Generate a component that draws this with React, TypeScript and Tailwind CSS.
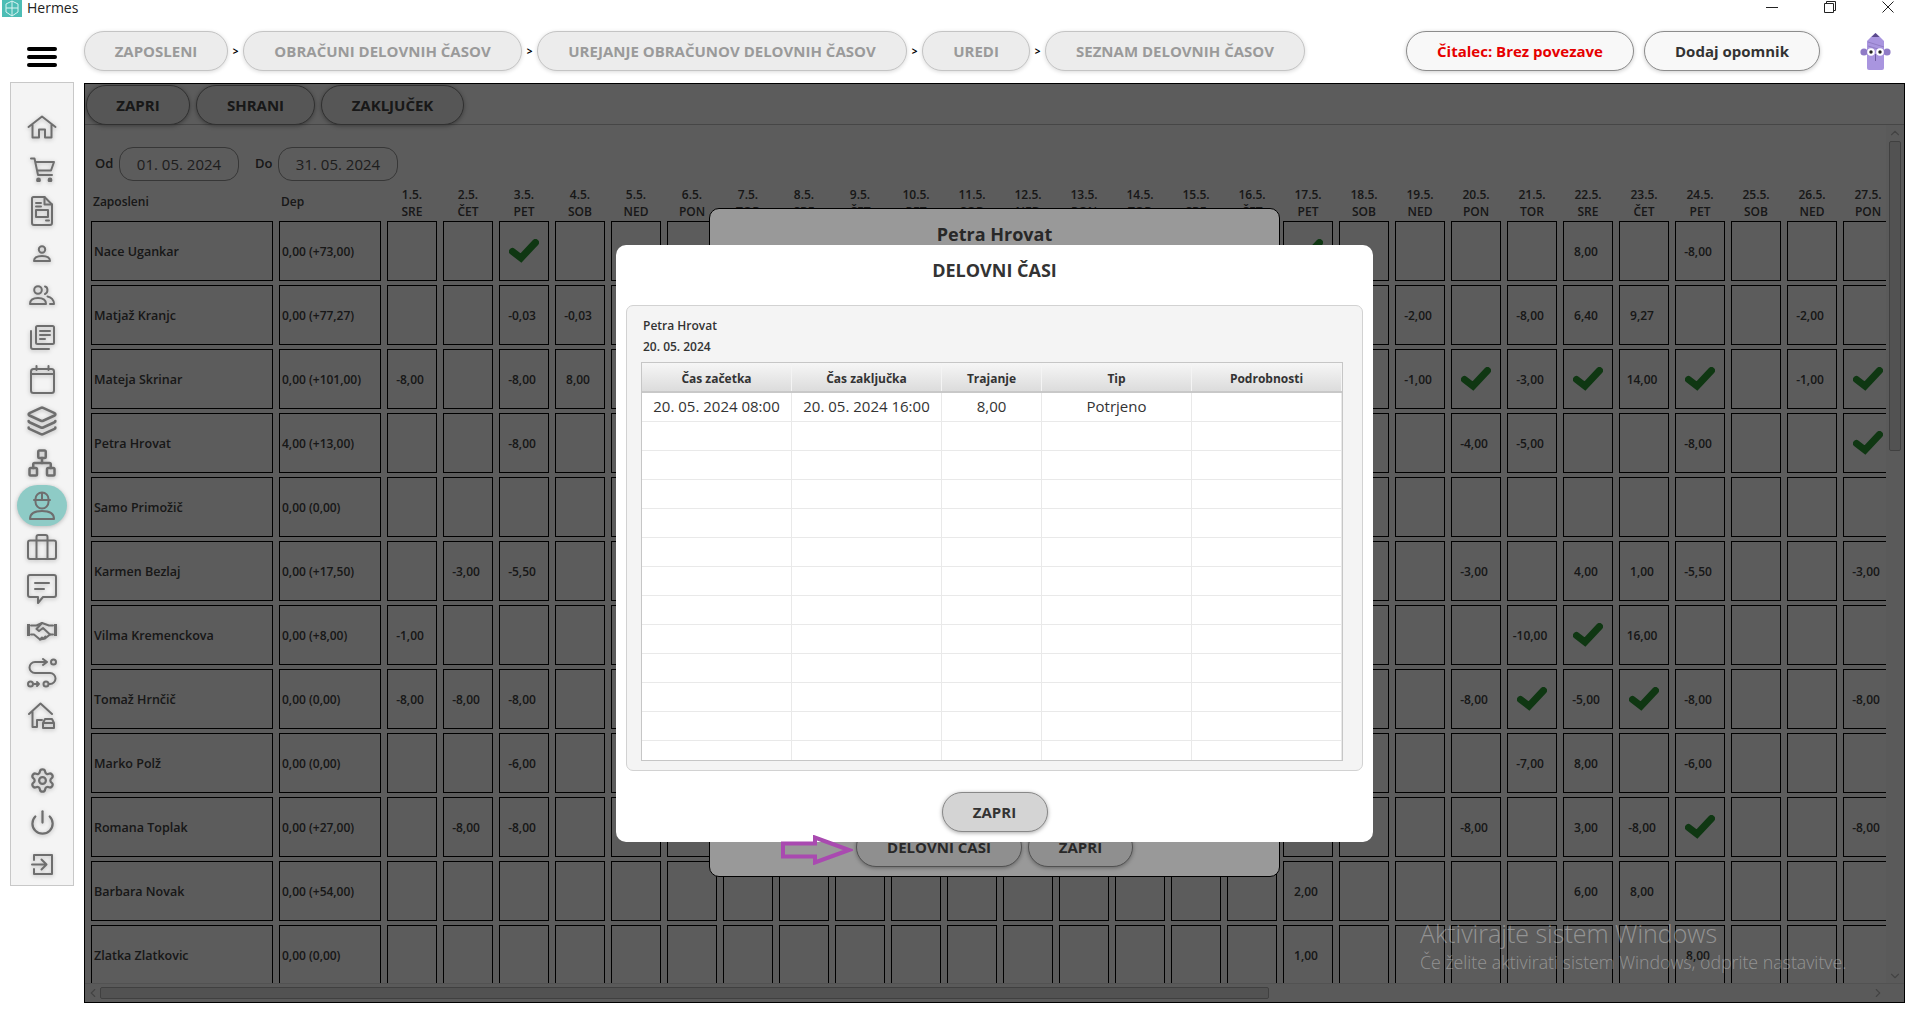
import { ChevronDown, ChevronLeft, ChevronRight, ChevronUp, Layers, Network, Power, Settings } from "lucide-react";
import type { ReactNode } from "react";

const WEEK = ["SRE", "ČET", "PET", "SOB", "NED", "PON", "TOR"];
const DAYS = Array.from({ length: 27 }, (_, i) => ({ day: i + 1, name: WEEK[i % 7] }));

const ROWS: { name: string; dep: string; cells: Record<number, string> }[] = [
  { name: "Nace Ugankar", dep: "0,00 (+73,00)", cells: { 3: "v", 17: "v", 22: "8,00", 24: "-8,00" } },
  { name: "Matjaž Kranjc", dep: "0,00 (+77,27)", cells: { 3: "-0,03", 4: "-0,03", 19: "-2,00", 21: "-8,00", 22: "6,40", 23: "9,27", 26: "-2,00" } },
  { name: "Mateja Skrinar", dep: "0,00 (+101,00)", cells: { 1: "-8,00", 3: "-8,00", 4: "8,00", 19: "-1,00", 20: "v", 21: "-3,00", 22: "v", 23: "14,00", 24: "v", 26: "-1,00", 27: "v" } },
  { name: "Petra Hrovat", dep: "4,00 (+13,00)", cells: { 3: "-8,00", 20: "-4,00", 21: "-5,00", 24: "-8,00", 27: "v" } },
  { name: "Samo Primožič", dep: "0,00 (0,00)", cells: {} },
  { name: "Karmen Bezlaj", dep: "0,00 (+17,50)", cells: { 2: "-3,00", 3: "-5,50", 20: "-3,00", 22: "4,00", 23: "1,00", 24: "-5,50", 27: "-3,00" } },
  { name: "Vilma Kremenckova", dep: "0,00 (+8,00)", cells: { 1: "-1,00", 21: "-10,00", 22: "v", 23: "16,00" } },
  { name: "Tomaž Hrnčič", dep: "0,00 (0,00)", cells: { 1: "-8,00", 2: "-8,00", 3: "-8,00", 20: "-8,00", 21: "v", 22: "-5,00", 23: "v", 24: "-8,00", 27: "-8,00" } },
  { name: "Marko Polž", dep: "0,00 (0,00)", cells: { 3: "-6,00", 21: "-7,00", 22: "8,00", 24: "-6,00" } },
  { name: "Romana Toplak", dep: "0,00 (+27,00)", cells: { 2: "-8,00", 3: "-8,00", 20: "-8,00", 22: "3,00", 23: "-8,00", 24: "v", 27: "-8,00" } },
  { name: "Barbara Novak", dep: "0,00 (+54,00)", cells: { 17: "2,00", 22: "6,00", 23: "8,00" } },
  { name: "Zlatka Zlatkovic", dep: "0,00 (0,00)", cells: { 17: "1,00", 24: "8,00" } },
];

const CRUMBS = [
  { label: "ZAPOSLENI", width: "w-[144px]" },
  { label: "OBRAČUNI DELOVNIH ČASOV", width: "w-[279px]" },
  { label: "UREJANJE OBRAČUNOV DELOVNIH ČASOV", width: "w-[370px]" },
  { label: "UREDI", width: "w-[108px]" },
  { label: "SEZNAM DELOVNIH ČASOV", width: "w-[260px]" },
];

const COLUMNS = [
  { label: "Čas začetka", width: "w-[150px]" },
  { label: "Čas zaključka", width: "w-[150px]" },
  { label: "Trajanje", width: "w-[100px]" },
  { label: "Tip", width: "w-[150px]" },
  { label: "Podrobnosti", width: "flex-1" },
];

const ENTRY = ["20. 05. 2024 08:00", "20. 05. 2024 16:00", "8,00", "Potrjeno", ""];

function Check() {
  return (
    <svg width="30" height="24" viewBox="0 0 30 24" fill="none">
      <path d="M3.5 12.5 12 19 26.5 3.5" stroke="#2a9a35" strokeWidth="7" strokeLinecap="round" />
    </svg>
  );
}

function Svg({ w, h, box, children }: { w: number; h: number; box: string; children: ReactNode }) {
  return (
    <svg width={w} height={h} viewBox={box} fill="none" stroke="currentColor" strokeWidth="2" strokeLinecap="round" strokeLinejoin="round">
      {children}
    </svg>
  );
}

const ICONS: ReactNode[] = [
  <Svg w={30} h={24} box="0 0 30 24" key="home">
    <path d="M1.5 12 15 1.5 28.5 12M5.5 9.5V22.5H12V14.5H18V22.5H24.5V9.5" />
  </Svg>,
  <Svg w={25} h={25} box="0 0 25 25" key="cart">
    <path d="M1 1.5h3.5L8 18h14M5.5 5H24l-3 8.5H7.5" />
    <circle cx="8.5" cy="23" r="1.4" fill="currentColor" />
    <circle cx="20" cy="23" r="1.4" fill="currentColor" />
  </Svg>,
  <Svg w={22} h={30} box="0 0 22 30" key="doc">
    <path d="M2.5 1h11L21 8.5V27a2 2 0 0 1-2 2H3a2 2 0 0 1-2-2V2.500A1.500 1.500 0 0 1 2.500 1Z" />
    <path d="M13.500 1v7.500H21M5 7h5M5 10.500h5M15 24.500h3" />
    <rect x="5" y="14" width="12" height="7" />
  </Svg>,
  <Svg w={18} h={17} box="0 0 18 17" key="user">
    <circle cx="9" cy="4.500" r="3.200" />
    <path d="M1 16c0-3.500 3.500-5 8-5s8 1.500 8 5Z" />
  </Svg>,
  <Svg w={26} h={20} box="0 0 26 20" key="users">
    <circle cx="9" cy="5" r="3.800" />
    <path d="M1 19c0-4 3.500-6 8-6s8 2 8 6ZM16 1.500c3 .5 3.500 6 0 7.500M18.500 11.500c3.500.5 6.500 3.500 6.500 7.500h-4" />
  </Svg>,
  <Svg w={25} h={25} box="0 0 25 25" key="news">
    <rect x="6" y="1" width="18" height="18" rx="1.500" />
    <path d="M10 6h10M10 10h10M10 14h5M1 6v16a2 2 0 0 0 2 2h16" />
  </Svg>,
  <Svg w={25} h={29} box="0 0 25 29" key="calendar">
    <rect x="1" y="4" width="23" height="24" rx="2.500" />
    <path d="M1 9h23M6.500 1v4M18.500 1v4" />
  </Svg>,
  <Layers size={32} key="layers" />,
  <Network size={30} key="network" />,
  <Svg w={26} h={30} box="0 0 26 30" key="worker">
    <path d="M6.500 9a6.500 6.500 0 0 1 13 0v3a6.500 6.500 0 0 1-13 0ZM5 10h16M13 2.500V10" />
    <path d="M1 29c0-6 5-8 12-8s12 2 12 8Z" />
  </Svg>,
  <Svg w={30} h={26} box="0 0 30 26" key="case">
    <rect x="1" y="6.500" width="28" height="18.500" rx="2" />
    <path d="M9.500 25V3a2 2 0 0 1 2-2h7a2 2 0 0 1 2 2v22" />
  </Svg>,
  <Svg w={30} h={30} box="0 0 30 30" key="message">
    <path d="M3 1h24a2 2 0 0 1 2 2v18a2 2 0 0 1-2 2H16l-5 6v-6H3a2 2 0 0 1-2-2V3a2 2 0 0 1 2-2Z" />
    <path d="M8 9h14M8 15h9" />
  </Svg>,
  <Svg w={30} h={20} box="0 0 30 20" key="hands">
    <path d="M1.500 3v12M28.500 3v12" strokeWidth="3" strokeLinecap="butt" />
    <path d="M4 4.500h5.500L15 2l7 2.500h4M4 13.500h3l6 5 5-1 5-4h3" />
    <path d="M15 2 9.500 8l2.500 2 4-3 7 6.500M13 18.500l2-2M16.500 17.500l2-2" />
  </Svg>,
  <Svg w={30} h={30} box="0 0 30 30" key="route">
    <path d="M19 4H8a5.500 5.500 0 0 0 0 11h15a5.500 5.500 0 0 1 0 11h-1" />
    <path d="m16 1 4 3-4 3" />
    <circle cx="26.500" cy="4" r="2.500" />
    <circle cx="3.500" cy="26" r="2.500" />
    <circle cx="19" cy="26" r="2.500" />
    <path d="M7 26h5m-2-2 2 2-2 2" />
  </Svg>,
  <Svg w={29} h={27} box="0 0 29 27" key="garage">
    <path d="M1 12 12.500 1.500 24 12M4.500 9.500V25H9v-7h5" />
    <path d="M15 26v-5l2-4h7l2 4v5ZM15 21h11" />
  </Svg>,
  <Settings size={27} key="settings" />,
  <Power size={27} key="power" />,
  <Svg w={23} h={23} box="0 0 23 23" key="login">
    <path d="M3 7V2h18v19H3v-5M1 11.500h14M10.500 6.500l5 5-5 5" />
  </Svg>,
];

function Sidebar() {
  return (
    <div className="ml-[10px] flex h-[804px] w-[64px] flex-col items-center border border-[#c8c8c8] bg-[#f4f4f4] pt-[23px] text-[#6e6e6e]">
      {ICONS.map((icon, i) => (
        <div
          key={i}
          className={`flex h-[42px] w-full shrink-0 items-center justify-center drop-shadow-[0_1px_2px_rgba(0,0,0,0.25)] ${i === 15 ? "mt-[23px]" : ""}`}
        >
          {i === 9 ? (
            <div className="flex h-[41px] w-[50px] items-center justify-center rounded-full bg-[#8ecbc6]">{icon}</div>
          ) : (
            icon
          )}
        </div>
      ))}
    </div>
  );
}

function Header() {
  return (
    <div className="flex h-[65px] shrink-0 items-start pt-[14px] pr-[29px]">
      <div className="flex w-[84px] flex-col gap-[4px] pt-[16px] pl-[27px]">
        <span className="h-[4px] w-[30px] rounded-full bg-black" />
        <span className="h-[4px] w-[30px] rounded-full bg-black" />
        <span className="h-[4px] w-[30px] rounded-full bg-black" />
      </div>
      {CRUMBS.map((crumb, i) => (
        <div key={crumb.label} className="flex items-center">
          {i > 0 && <span className="w-[15px] text-center text-[10px] font-bold text-black">&gt;</span>}
          <div
            className={`flex h-[40px] items-center justify-center rounded-[20px] border border-[#c4c4c4] bg-[#ececec] text-[15px] font-bold text-[#9a9a9a] shadow-[0_1px_4px_rgba(0,0,0,0.15)] ${crumb.width}`}
          >
            {crumb.label}
          </div>
        </div>
      ))}
      <div className="ml-auto flex h-[40px] w-[228px] items-center justify-center rounded-[20px] border border-[#8c8c8c] bg-[#f8f8f8] text-[15px] font-bold text-[#e60000] shadow-[0_1px_4px_rgba(0,0,0,0.2)]">
        Čitalec: Brez povezave
      </div>
      <div className="ml-[10px] flex h-[40px] w-[176px] items-center justify-center rounded-[20px] border border-[#8c8c8c] bg-[#f8f8f8] text-[15px] font-bold text-[#333] shadow-[0_1px_4px_rgba(0,0,0,0.2)]">
        Dodaj opomnik
      </div>
      <svg className="mt-[2px] ml-[40px]" width="31" height="37" viewBox="0 0 31 37">
        <circle cx="4" cy="19" r="3.600" fill="#8f7bc6" />
        <circle cx="27" cy="19" r="3.600" fill="#8f7bc6" />
        <path d="M15.500 0 20 4l4 4v27a2 2 0 0 1-2 2H9a2 2 0 0 1-2-2V8l4-4Z" fill="#a995df" />
        <path d="M11.500 4h8L15.500 0Z" fill="#5b4a8c" />
        <path d="M8 9l16 5M8 13l10 3" stroke="#8a76bd" strokeWidth="0.800" />
        <circle cx="11" cy="19" r="3.800" fill="#fff" />
        <circle cx="20" cy="19" r="3.800" fill="#fff" />
        <circle cx="11" cy="19" r="1.700" fill="#222" />
        <circle cx="20" cy="19" r="1.700" fill="#222" />
        <path d="M15.500 21v7" stroke="#6d5b9e" strokeWidth="1" />
      </svg>
    </div>
  );
}

function TitleBar() {
  return (
    <div className="flex h-[17px] shrink-0 items-start text-[14px] leading-[15px] text-[#222]">
      <svg className="ml-[2px]" width="20" height="17" viewBox="0 0 20 17" fill="none">
        <rect width="20" height="17" fill="#4dbdb5" />
        <path d="M10 1 16 4v8l-6 4-6-4V4ZM10 1v15M4 8h12" stroke="#d9f3f1" strokeWidth="1" />
      </svg>
      <span className="ml-[5px]">Hermes</span>
      <div className="mt-[1px] ml-auto flex items-center gap-[46px] pr-[26px]">
        <span className="h-px w-[12px] bg-[#222]" />
        <svg width="12" height="12" viewBox="0 0 12 12" fill="none" stroke="#222">
          <path d="M.5 2.500h9v9h-9ZM2.500 2.500V.5h9v9h-2" />
        </svg>
        <svg width="12" height="12" viewBox="0 0 12 12" fill="none" stroke="#222">
          <path d="M.5.5l11 11M11.500.5l-11 11" />
        </svg>
      </div>
    </div>
  );
}

function Pill({ children, className }: { children: ReactNode; className: string }) {
  return (
    <div
      className={`flex h-[40px] items-center justify-center rounded-[20px] border border-[#888] bg-[#eeeeee] text-[15px] font-bold text-[#444] shadow-[0_1px_4px_rgba(0,0,0,0.35)] ${className}`}
    >
      {children}
    </div>
  );
}

function DateField({ label, value, labelWidth }: { label: string; value: string; labelWidth: string }) {
  return (
    <>
      <span className={`text-[13px] font-semibold text-[#444] ${labelWidth}`}>{label}</span>
      <div className="flex h-[34px] w-[120px] items-center justify-center rounded-[14px] border border-[#999] text-[15px] text-[#555]">
        {value}
      </div>
    </>
  );
}

function Grid() {
  return (
    <div className="flex-1 overflow-hidden pl-[6px] text-[12px] font-semibold text-[#444]">
      <div className="mt-[4px] flex h-[36px] items-center">
        <span className="mb-[3px] w-[188px] shrink-0 pl-[2px]">Zaposleni</span>
        <span className="mb-[3px] w-[108px] shrink-0 pl-[2px]">Dep</span>
        {DAYS.map((d) => (
          <div key={d.day} className="mr-[6px] w-[50px] shrink-0 text-center leading-[17px]">
            <div>{d.day}.5.</div>
            <div>{d.name}</div>
          </div>
        ))}
      </div>
      <div className="flex flex-col gap-[4px]">
        {ROWS.map((row) => (
          <div key={row.name} className="flex h-[60px] shrink-0">
            <div className="mr-[6px] flex w-[182px] shrink-0 items-center border border-black pt-[2px] pl-[2px] text-[12.5px]">{row.name}</div>
            <div className="mr-[6px] flex w-[102px] shrink-0 items-center border border-black pt-[2px] pl-[2px]">{row.dep}</div>
            {DAYS.map((d) => (
              <div key={d.day} className="mr-[6px] flex w-[50px] shrink-0 items-center justify-center border border-black">
                {row.cells[d.day] === "v" ? <Check /> : <span className="pt-[2px] pr-[4px]">{row.cells[d.day]}</span>}
              </div>
            ))}
          </div>
        ))}
      </div>
    </div>
  );
}

function EmployeeDialog() {
  return (
    <div className="absolute top-[124px] left-[624px] flex h-[669px] w-[571px] flex-col items-center justify-between rounded-[10px] border border-black bg-white pt-[12px] pb-[9px]">
      <div className="text-[18px] font-bold text-[#444]">Petra Hrovat</div>
      <div className="flex gap-[6px]">
        <Pill className="w-[166px]">DELOVNI ČASI</Pill>
        <Pill className="w-[105px]">ZAPRI</Pill>
      </div>
    </div>
  );
}

function TimesDialog() {
  return (
    <div className="absolute top-[161px] left-[531px] flex h-[597px] w-[757px] flex-col rounded-[10px] bg-white">
      <div className="flex h-[60px] shrink-0 items-center justify-center pb-[10px] text-[18px] font-bold text-[#333]">DELOVNI ČASI</div>
      <div className="mx-[10px] flex h-[466px] shrink-0 flex-col rounded-[7px] border border-[#d2d2d2] bg-[#f4f4f4] pr-[19px] pb-[9px] pl-[14px]">
        <div className="h-[56px] shrink-0 pt-[9px] pl-[2px] text-[12px] leading-[21px] font-semibold text-[#333]">
          <div>Petra Hrovat</div>
          <div>20. 05. 2024</div>
        </div>
        <div className="flex-1 overflow-hidden border border-[#c6c6c6] bg-white">
          <div className="flex h-[30px] border-b-2 border-[#c8c8c8] bg-gradient-to-b from-[#f6f6f6] to-[#dcdcdc]">
            {COLUMNS.map((col) => (
              <div
                key={col.label}
                className={`flex items-center justify-center border-r border-[#f4f4f4] pt-[3px] text-[12px] font-bold text-[#333] ${col.width}`}
              >
                {col.label}
              </div>
            ))}
          </div>
          {Array.from({ length: 13 }, (_, r) => (
            <div key={r} className="flex h-[29px] border-b border-[#e9e9e9]">
              {COLUMNS.map((col, c) => (
                <div
                  key={col.label}
                  className={`flex items-center justify-center border-r border-[#e9e9e9] pb-[2px] text-[15px] text-[#333] ${col.width}`}
                >
                  {r === 0 ? ENTRY[c] : ""}
                </div>
              ))}
            </div>
          ))}
        </div>
      </div>
      <div className="flex justify-center pt-[21px]">
        <div className="flex h-[40px] w-[106px] items-center justify-center rounded-[20px] border border-[#888] bg-[#d4d4d4] text-[15px] font-bold text-[#333] shadow-[0_1px_4px_rgba(0,0,0,0.35)]">
          ZAPRI
        </div>
      </div>
    </div>
  );
}

function Panel() {
  return (
    <div className="relative mt-[1px] ml-[10px] flex h-[920px] w-[1821px] flex-col overflow-hidden border border-black bg-white">
      <div className="flex h-[41px] shrink-0 gap-[6px] border-b border-[#c4c4c4] pt-px pl-px">
        <Pill className="h-[39px] w-[104px]">ZAPRI</Pill>
        <Pill className="h-[39px] w-[119px]">SHRANI</Pill>
        <Pill className="h-[39px] w-[143px]">ZAKLJUČEK</Pill>
      </div>
      <div className="flex min-h-0 flex-1">
        <div className="flex min-w-0 flex-1 flex-col">
          <div className="flex shrink-0 items-center pt-[22px] pl-[10px]">
            <DateField label="Od" value="01. 05. 2024" labelWidth="w-[24px]" />
            <span className="w-[16px]" />
            <DateField label="Do" value="31. 05. 2024" labelWidth="w-[23px]" />
          </div>
          <Grid />
        </div>
        <div className="flex w-[18px] shrink-0 flex-col items-center bg-[#fbfbfb] text-[#bbbbbb]">
          <ChevronUp size={14} className="mt-[1px] shrink-0" />
          <div className="mt-[1px] h-[310px] w-[12px] shrink-0 rounded-[2px] border border-[#b4b4b4] bg-[#e4e4e4]" />
          <ChevronDown size={14} className="mt-auto shrink-0" />
        </div>
      </div>
      <div className="flex h-[19px] shrink-0 items-center border-t border-[#e4e4e4] bg-[#fbfbfb] text-[#bbbbbb]">
        <ChevronLeft size={14} className="ml-[1px] shrink-0" />
        <div className="h-[12px] w-[1169px] rounded-[2px] border border-[#b4b4b4] bg-[#e4e4e4]" />
        <ChevronRight size={14} className="mr-[19px] ml-auto shrink-0" />
      </div>

      <div className="absolute inset-0 bg-black/40" />
      <EmployeeDialog />
      <div className="absolute inset-0 bg-black/40" />
      <TimesDialog />

      <svg className="absolute top-[751px] left-[696px]" width="72" height="30" viewBox="0 0 72 30" fill="none">
        <path d="M2 8.500h32V2.500L68 15 34 27.500v-6H2Z" stroke="#a94ab0" strokeWidth="4" />
      </svg>
      <div className="absolute top-[833px] left-[1335px] text-white/35">
        <div className="text-[25px] leading-[32px] font-light">Aktivirajte sistem Windows</div>
        <div className="text-[17.75px] leading-[26px] font-light">Če želite aktivirati sistem Windows, odprite nastavitve.</div>
      </div>
    </div>
  );
}

export default function App() {
  return (
    <div className="flex h-[1018px] w-[1920px] flex-col overflow-hidden bg-white font-['Open_Sans',sans-serif]">
      <TitleBar />
      <Header />
      <div className="flex min-h-0 flex-1 items-start">
        <Sidebar />
        <Panel />
      </div>
    </div>
  );
}
